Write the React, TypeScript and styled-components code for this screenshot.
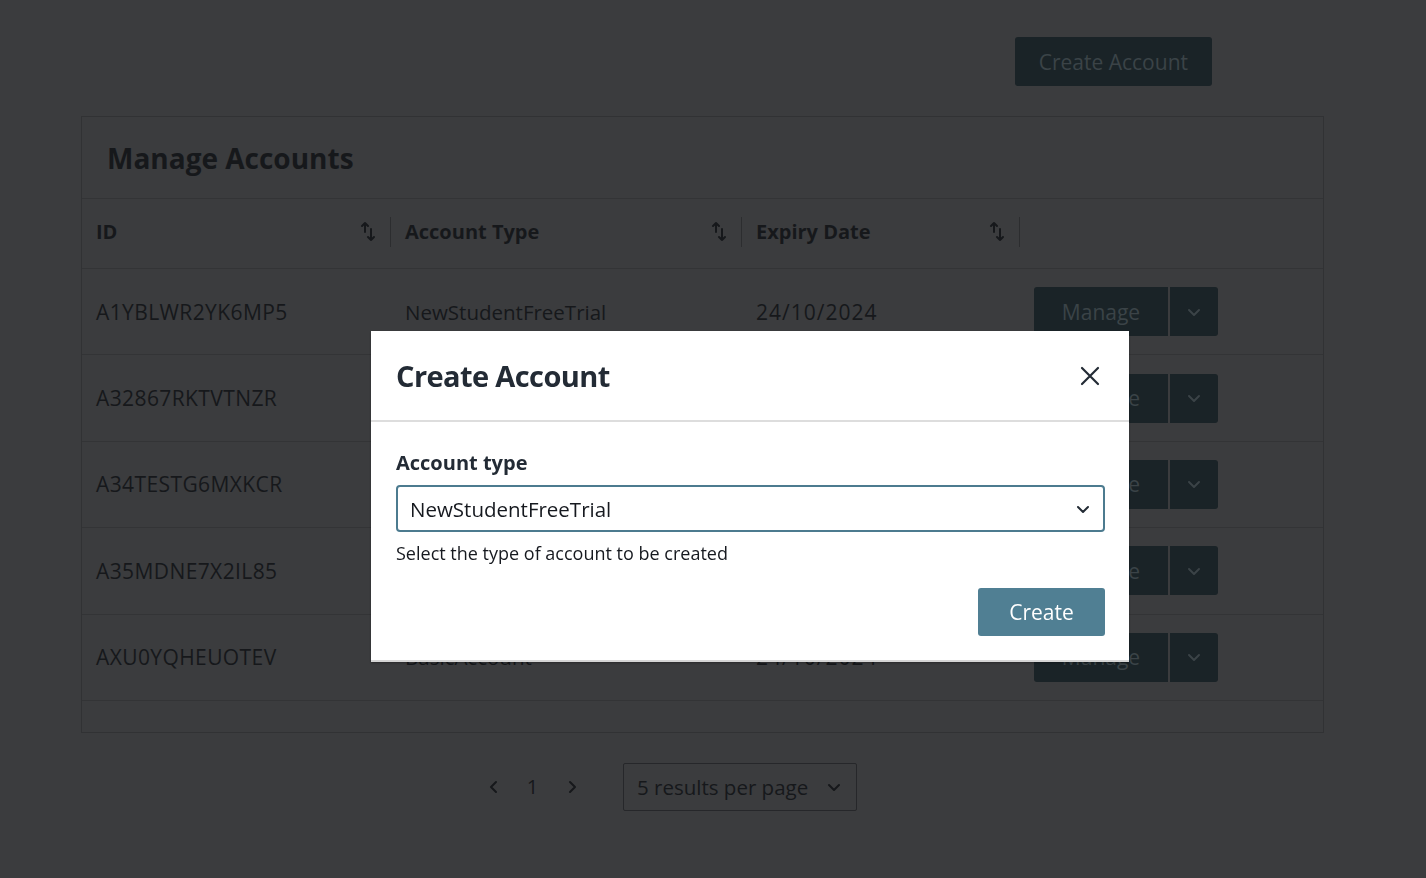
import { Fragment } from 'react';
import styled, { createGlobalStyle } from 'styled-components';

const GlobalStyle = createGlobalStyle`
  body {
    margin: 0;
    background: #3b3c3e;
    font-family: "Open Sans", "Noto Sans", sans-serif;
    color: #16181b;
  }
`;

const Page = styled.main`
  padding: 37px 102px 60px 81px;
  min-height: 878px;
  box-sizing: border-box;
`;

const TopBar = styled.div`
  display: flex;
  justify-content: flex-end;
  padding-right: 112px;
  margin-bottom: 30px;
`;

const DarkButton = styled.button`
  height: 49px;
  padding: 0 24px;
  background: #1a2327;
  color: #3b4347;
  border: none;
  border-radius: 3px;
  font-family: inherit;
  font-size: 21px;
  font-weight: 500;
`;

const Panel = styled.section`
  border: 1px solid #313234;
`;

const PanelHeader = styled.div`
  height: 81px;
  display: flex;
  align-items: center;
  padding-left: 25px;
  border-bottom: 1px solid #333436;
`;

const PanelTitle = styled.h1`
  margin: 0;
  font-size: 28px;
  font-weight: 700;
  color: #16181b;
`;

const Grid = styled.div`
  display: grid;
  grid-template-columns: 309px 351px 278px 1fr;
`;

const HeadCell = styled.div<{ $divider?: boolean }>`
  height: 70px;
  box-sizing: border-box;
  padding: 0 14px 4px;
  display: flex;
  align-items: center;
  justify-content: space-between;
  font-size: 20px;
  font-weight: 700;
  border-bottom: 1px solid #333436;
  position: relative;
  &::after {
    content: '';
    display: ${(p) => (p.$divider ? 'block' : 'none')};
    position: absolute;
    right: 0;
    top: 18px;
    bottom: 21px;
    width: 1px;
    background: #2c2d2f;
  }
`;

const Cell = styled.div<{ $size?: number; $spacing?: number }>`
  height: 86.4px;
  box-sizing: border-box;
  display: flex;
  align-items: center;
  padding: 0 14px;
  font-size: ${(p) => p.$size ?? 20.5}px;
  letter-spacing: ${(p) => p.$spacing ?? 0}px;
  border-bottom: 1px solid #333436;
`;

const Filler = styled.div`
  height: 31px;
`;

const SplitButton = styled.div`
  display: flex;
  gap: 2px;
`;

const ManageBtn = styled(DarkButton)`
  width: 134px;
  padding: 0;
  border-radius: 3px 0 0 3px;
`;

const CaretBtn = styled(DarkButton)`
  width: 48px;
  padding: 0;
  border-radius: 0 3px 3px 0;
  display: flex;
  align-items: center;
  justify-content: center;
`;

const Pager = styled.nav`
  display: flex;
  justify-content: center;
  align-items: center;
  padding-right: 74px;
  margin-top: 30px;
`;

const PageArrow = styled.span`
  width: 39px;
  display: flex;
  justify-content: center;
  align-items: center;
`;

const PageNum = styled.span`
  font-size: 20px;
  width: 39px;
  text-align: center;
`;

const PerPage = styled.div`
  margin-left: 32px;
  width: 234px;
  height: 48px;
  box-sizing: border-box;
  border: 1px solid #26272a;
  border-radius: 2px;
  display: flex;
  align-items: center;
  justify-content: space-between;
  padding: 0 14px 0 13px;
  font-size: 20.5px;
`;

const Backdrop = styled.div`
  position: fixed;
  inset: 0;
  padding: 331px 0 0 371px;
`;

const Modal = styled.div`
  width: 758px;
  background: #ffffff;
  box-shadow: 0 1px 2px rgba(0, 0, 0, 0.3);
  border-bottom: 2px solid #d5d5d5;
  color: #232b35;
`;

const ModalHeader = styled.div`
  height: 91px;
  box-sizing: border-box;
  display: flex;
  align-items: center;
  justify-content: space-between;
  padding: 0 28px 0 25px;
  border-bottom: 2px solid #dddddd;
`;

const ModalTitle = styled.h2`
  margin: 0;
  font-size: 29px;
  font-weight: 700;
  letter-spacing: -0.6px;
`;

const ModalBody = styled.div`
  padding: 27px 24px 24px 25px;
`;

const Label = styled.div`
  font-size: 20px;
  font-weight: 700;
  margin-bottom: 9px;
`;

const SelectBox = styled.div`
  height: 47px;
  box-sizing: border-box;
  border: 2px solid #4c7b8f;
  border-radius: 4px;
  display: flex;
  align-items: center;
  justify-content: space-between;
  padding: 0 12px 0 12px;
  font-size: 20.5px;
  color: #16191f;
`;

const Hint = styled.div`
  margin-top: 9px;
  font-size: 18px;
  color: #16191f;
`;

const Footer = styled.div`
  display: flex;
  justify-content: flex-end;
  margin-top: 23px;
`;

const PrimaryButton = styled.button`
  width: 127px;
  height: 48px;
  background: #507f93;
  color: #ffffff;
  border: none;
  border-radius: 3px;
  font-family: inherit;
  font-size: 21px;
  font-weight: 500;
`;

const Chevron = ({ dir = 'down', color = '#16181b', size = 16 }: { dir?: 'down' | 'left' | 'right'; color?: string; size?: number }) => {
  const d = dir === 'down' ? 'M3 6l5 5 5-5' : dir === 'left' ? 'M10 3L5 8l5 5' : 'M6 3l5 5-5 5';
  return (
    <svg width={size} height={size} viewBox="0 0 16 16" fill="none">
      <path d={d} stroke={color} strokeWidth="2" strokeLinecap="round" strokeLinejoin="round" />
    </svg>
  );
};

const SortIcon = () => (
  <svg width="18" height="22" viewBox="0 0 18 22" fill="none">
    <path d="M6 2v9M3 5l3-3 3 3" stroke="#16181b" strokeWidth="2" strokeLinecap="round" strokeLinejoin="round" />
    <path d="M12 8v11M9 16l3 3 3-3" stroke="#16181b" strokeWidth="2" strokeLinecap="round" strokeLinejoin="round" />
  </svg>
);

const CloseIcon = () => (
  <svg width="22" height="22" viewBox="0 0 22 22" fill="none">
    <path d="M3 3l16 16M19 3L3 19" stroke="#232b35" strokeWidth="2.2" strokeLinecap="round" />
  </svg>
);

const accounts = [
  { id: 'A1YBLWR2YK6MP5', type: 'NewStudentFreeTrial', expiry: '24/10/2024' },
  { id: 'A32867RKTVTNZR', type: 'BasicAccount', expiry: '24/10/2024' },
  { id: 'A34TESTG6MXKCR', type: 'BasicAccount', expiry: '24/10/2024' },
  { id: 'A35MDNE7X2IL85', type: 'NewStudentFreeTrial', expiry: '24/10/2024' },
  { id: 'AXU0YQHEUOTEV', type: 'BasicAccount', expiry: '24/10/2024' },
];

export default function App() {
  return (
    <>
      <GlobalStyle />
      <Page>
        <TopBar>
          <DarkButton>Create Account</DarkButton>
        </TopBar>

        <Panel>
          <PanelHeader>
            <PanelTitle>Manage Accounts</PanelTitle>
          </PanelHeader>
          <Grid>
            <HeadCell $divider>
              ID <SortIcon />
            </HeadCell>
            <HeadCell $divider>
              Account Type <SortIcon />
            </HeadCell>
            <HeadCell $divider>
              Expiry Date <SortIcon />
            </HeadCell>
            <HeadCell />
            {accounts.map((a) => (
              <Fragment key={a.id}>
                <Cell $size={21} $spacing={0.4}>{a.id}</Cell>
                <Cell>{a.type}</Cell>
                <Cell $size={21} $spacing={1}>{a.expiry}</Cell>
                <Cell>
                  <SplitButton>
                    <ManageBtn>Manage</ManageBtn>
                    <CaretBtn>
                      <Chevron color="#3b4347" />
                    </CaretBtn>
                  </SplitButton>
                </Cell>
              </Fragment>
            ))}
          </Grid>
          <Filler />
        </Panel>

        <Pager>
          <PageArrow>
            <Chevron dir="left" />
          </PageArrow>
          <PageNum>1</PageNum>
          <PageArrow>
            <Chevron dir="right" />
          </PageArrow>
          <PerPage>
            5 results per page
            <Chevron />
          </PerPage>
        </Pager>
      </Page>

      <Backdrop>
        <Modal>
          <ModalHeader>
            <ModalTitle>Create Account</ModalTitle>
            <CloseIcon />
          </ModalHeader>
          <ModalBody>
            <Label>Account type</Label>
            <SelectBox>
              NewStudentFreeTrial
              <Chevron color="#232b35" />
            </SelectBox>
            <Hint>Select the type of account to be created</Hint>
            <Footer>
              <PrimaryButton>Create</PrimaryButton>
            </Footer>
          </ModalBody>
        </Modal>
      </Backdrop>
    </>
  );
}
